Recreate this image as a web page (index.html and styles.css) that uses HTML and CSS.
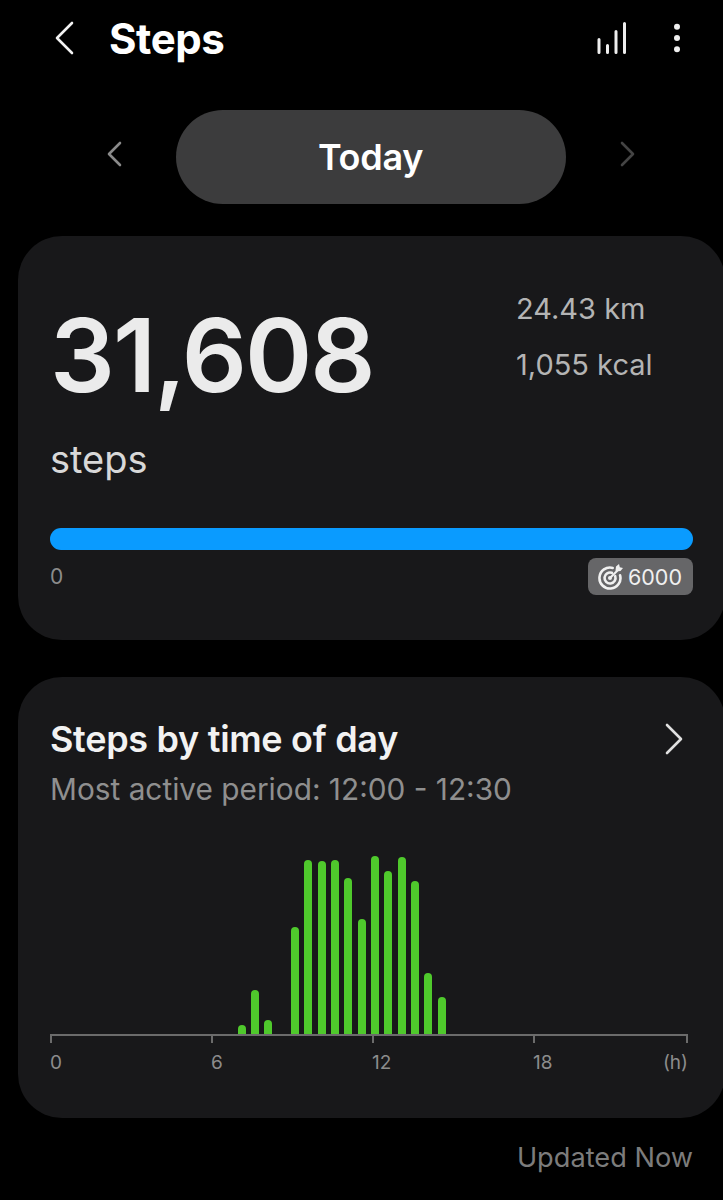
FILE: index.html
```html
<!DOCTYPE html>
<html lang="en">
<head>
    <meta charset="UTF-8">
    <title>Steps</title>
    <link rel="stylesheet" href="styles.css">
</head>
<body>
    <header class="app-bar">
        <svg class="back-icon" width="20" height="34" viewBox="0 0 20 34"><path d="M18 2 3 17l15 15" /></svg>
        <h1 class="app-title">Steps</h1>
        <svg class="bars-icon" width="32" height="32" viewBox="0 0 32 32"><path d="M3 17.500v13M11.500 23.500v7M20 9.500v21M28.500 1.500v29" /></svg>
        <svg class="more-icon" width="8" height="30" viewBox="0 0 8 30"><circle cx="4" cy="3.700" r="3" /><circle cx="4" cy="15" r="3" /><circle cx="4" cy="26.300" r="3" /></svg>
    </header>

    <div class="date-row">
        <svg class="date-arrow" width="16" height="26" viewBox="0 0 16 26"><path d="M14 2 3 13l11 11" /></svg>
        <div class="date-pill">Today</div>
        <svg class="date-arrow dim" width="16" height="26" viewBox="0 0 16 26"><path d="M2 2l11 11L2 24" /></svg>
    </div>

    <section class="card summary-card">
        <div class="summary-top">
            <div class="step-count">31,608</div>
            <div class="summary-side">
                <div>24.43 km</div>
                <div>1,055 kcal</div>
            </div>
        </div>
        <div class="step-unit">steps</div>
        <div class="progress"></div>
        <div class="progress-labels">
            <span>0</span>
            <span class="goal-badge">
                <svg width="26" height="26" viewBox="0 0 26 26">
                    <path class="goal-ring" d="M22.100 11.300A10.500 10.500 0 1 1 14.700 3.900" />
                    <path class="goal-ring" d="M17.200 12.100A5.500 5.500 0 1 1 13.900 8.800" />
                    <circle class="goal-dot" cx="12" cy="14" r="2" />
                    <path class="goal-shaft" d="M12 14l7-7" />
                    <path class="goal-dot" d="M17.500 6.500l.5-4 3-2.500.8 3.200 3.200.8-2.500 3-4 .5z" />
                </svg>
                6000
            </span>
        </div>
    </section>

    <section class="card chart-card">
        <div class="chart-head">
            <h2 class="chart-title">Steps by time of day</h2>
            <svg class="chart-more" width="20" height="32" viewBox="0 0 20 32"><path d="M3 2l14 14L3 30" /></svg>
        </div>
        <p class="chart-sub">Most active period: 12:00 - 12:30</p>
        <div class="bars" id="bars"></div>
        <div class="axis-ticks"><i></i><i></i><i></i><i></i></div>
        <div class="axis-labels">
            <span>0</span>
            <span>6</span>
            <span>12</span>
            <span class="axis-last"><span>18</span><span>(h)</span></span>
        </div>
    </section>

    <p class="updated">Updated Now</p>

    <script>
        // height of each half hour slot in px, slot 14 is 07:00
        const slots = { 14: 9, 15: 44, 16: 14, 18: 107, 19: 174, 20: 173, 21: 174, 22: 156, 23: 115, 24: 178, 25: 163, 26: 177, 27: 153, 28: 61, 29: 37 };
        const bars = document.getElementById('bars');
        for (let i = 0; i < 48; i++) {
            const slot = document.createElement('div');
            slot.className = 'slot';
            if (slots[i]) {
                const bar = document.createElement('div');
                bar.className = 'bar';
                bar.style.height = slots[i] + 'px';
                slot.appendChild(bar);
            }
            bars.appendChild(slot);
        }
    </script>
</body>
</html>
```

FILE: styles.css
```css
* {
    box-sizing: border-box;
}
body {
    margin: 0;
    height: 1200px;
    overflow: hidden;
    background: #000;
    color: #fff;
    font-family: Inter, "Noto Sans", sans-serif;
}
svg path {
    fill: none;
    stroke: currentColor;
    stroke-linecap: round;
    stroke-linejoin: round;
}
.app-bar {
    display: flex;
    align-items: center;
    height: 76px;
    padding-left: 54px;
}
.back-icon {
    color: #f2f2f2;
    stroke-width: 2.600px;
}
.app-title {
    margin: 0 0 0 35px;
    font-size: 42px;
    font-weight: 700;
    letter-spacing: -0.4px;
}
.bars-icon {
    margin-left: auto;
    color: #eee;
    stroke-width: 3px;
}
.more-icon {
    margin: 0 42px 0 45px;
    fill: #f0f0f0;
}
.date-row {
    display: flex;
    align-items: center;
    justify-content: center;
    gap: 54px;
    margin: 34px 0 0 18px;
}
.date-arrow {
    margin-bottom: 6px;
    color: #8a8a8a;
    stroke-width: 2.600px;
}
.date-arrow.dim {
    color: #444;
}
.date-pill {
    display: flex;
    align-items: center;
    justify-content: center;
    width: 390px;
    height: 94px;
    border-radius: 47px;
    background: #3c3c3d;
    font-size: 36px;
    font-weight: 600;
    letter-spacing: -0.3px;
}
.card {
    width: 707px;
    margin-left: 18px;
    background: #18181a;
    border-radius: 44px;
}
.summary-card {
    height: 404px;
    margin-top: 32px;
    padding: 0 32px;
}
.summary-top {
    display: flex;
    justify-content: space-between;
    height: 182px;
}
.step-count {
    margin-top: 59px;
    font-size: 102px;
    line-height: 120px;
    font-weight: 600;
    letter-spacing: -2px;
    color: #ebebeb;
}
.summary-side {
    width: 177px;
    padding-top: 45px;
    font-size: 29px;
    line-height: 56px;
    color: #b4b4b4;
}
.step-unit {
    margin-top: 19px;
    font-size: 38px;
    line-height: 44px;
    color: #d8d8d8;
}
.progress {
    width: 643px;
    height: 22px;
    margin-top: 47px;
    border-radius: 11px;
    background: #0a9bff;
}
.progress-labels {
    display: flex;
    justify-content: space-between;
    align-items: center;
    width: 643px;
    margin-top: 8px;
    font-size: 21px;
    color: #8c8c8c;
}
.goal-badge {
    display: flex;
    align-items: center;
    gap: 4px;
    height: 37px;
    padding: 0 11px 0 10px;
    border-radius: 8px;
    background: #666668;
    font-size: 21.500px;
    color: #f0f0f0;
}
.goal-ring {
    stroke-width: 2.600px;
}
.goal-shaft {
    stroke-width: 2.200px;
}
.goal-dot {
    fill: currentColor;
}
path.goal-dot {
    fill: currentColor;
    stroke: none;
}
.chart-card {
    height: 441px;
    margin-top: 37px;
    padding: 42px 32px 0;
}
.chart-head {
    display: flex;
    justify-content: space-between;
    align-items: center;
    width: 636px;
}
.chart-title {
    margin: 0;
    font-size: 36px;
    line-height: 40px;
    font-weight: 600;
    letter-spacing: -0.3px;
    color: #f2f2f2;
}
.chart-more {
    margin-right: 2px;
    color: #e0e0e0;
    stroke-width: 2.600px;
}
.chart-sub {
    margin: 10px 0 0;
    font-size: 29.800px;
    line-height: 40px;
    color: #8f8f8f;
}
.bars {
    display: grid;
    grid-template-columns: repeat(48, 13.333px);
    align-items: end;
    height: 188px;
    margin: 37px 0 0 -1.500px;
}
.slot {
    display: flex;
    align-items: flex-end;
    justify-content: center;
}
.bar {
    width: 8px;
    border-radius: 4px 4px 0 0;
    background: #4fc92c;
}
.axis-ticks,
.axis-labels {
    display: grid;
    grid-template-columns: 161px 161px 161px 155px;
    width: 638px;
}
.axis-ticks {
    height: 9px;
    border-top: 2px solid #6b6b6b;
}
.axis-ticks i {
    border-left: 2px solid #6b6b6b;
}
.axis-ticks i:last-child {
    border-right: 2px solid #6b6b6b;
}
.axis-labels {
    margin-top: 8px;
    font-size: 19px;
    line-height: 24px;
    color: #8c8c8c;
}
.axis-last {
    display: flex;
    justify-content: space-between;
}
.updated {
    margin: 22px 30px 0 0;
    text-align: right;
    font-size: 27.200px;
    line-height: 36px;
    color: #7c7c7c;
}
```
